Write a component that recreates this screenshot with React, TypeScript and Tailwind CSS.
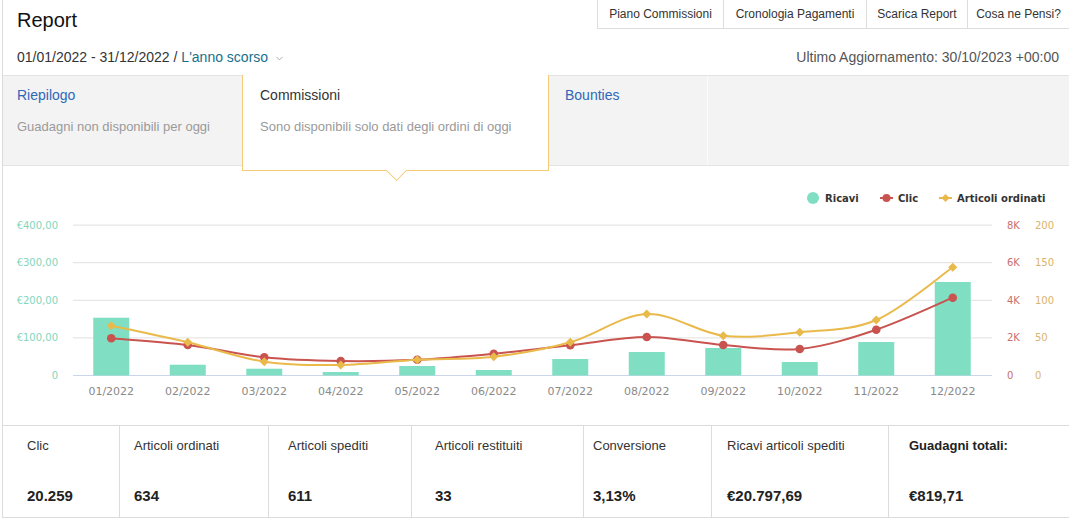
import { ChevronDown } from "lucide-react";

const months = [
  "01/2022", "02/2022", "03/2022", "04/2022", "05/2022", "06/2022",
  "07/2022", "08/2022", "09/2022", "10/2022", "11/2022", "12/2022",
];

// pixel positions read off the chart (page coordinates)
const barTops = [317.7, 364.7, 368.7, 372, 366, 370, 359, 352, 348, 362, 342, 282];
const clicY = [338.3, 345, 357.3, 361, 359.7, 353.7, 345.3, 337, 345, 349, 329.7, 297.7];
const ordiniY = [325.7, 342.3, 361.7, 365, 359.7, 356.7, 342.3, 314, 335.7, 332.3, 320, 267.3];

const BASE = 375.5;
const cx = (i: number) => 73 + 76.5 * (i + 0.5);

function spline(ys: number[]) {
  const pts = ys.map((y, i) => [cx(i), y]);
  let d = `M${pts[0][0]},${pts[0][1]}`;
  for (let i = 0; i < pts.length - 1; i++) {
    const p0 = pts[i - 1] || pts[i];
    const p1 = pts[i];
    const p2 = pts[i + 1];
    const p3 = pts[i + 2] || p2;
    const c1x = p1[0] + (p2[0] - p0[0]) / 6;
    const c1y = p1[1] + (p2[1] - p0[1]) / 6;
    const c2x = p2[0] - (p3[0] - p1[0]) / 6;
    const c2y = p2[1] - (p3[1] - p1[1]) / 6;
    d += ` C${c1x},${c1y} ${c2x},${c2y} ${p2[0]},${p2[1]}`;
  }
  return d;
}

const diamond = (x: number, y: number, s = 4.5) =>
  `M${x},${y - s} L${x + s},${y} L${x},${y + s} L${x - s},${y} Z`;

const grid = [225.1, 262.7, 300.3, 337.9];
const leftLabels = ["€400,00", "€300,00", "€200,00", "€100,00", "0"];
const kLabels = ["8K", "6K", "4K", "2K", "0"];
const nLabels = ["200", "150", "100", "50", "0"];
const labelY = [225.1, 262.7, 300.3, 337.9, 375.5];

const RED = "#c8534f";
const YEL = "#e9b94a";
const TEAL = "#80dfc3";

function Chart() {
  const font = "'DejaVu Sans', Verdana, sans-serif";
  return (
    <svg width="1066" height="259" viewBox="3 166 1066 259" className="block">
      {/* legend */}
      <circle cx="813" cy="198" r="6" fill={TEAL} />
      <text x="825" y="201.5" fontFamily={font} fontSize="10" fontWeight="bold" fill="#333">Ricavi</text>
      <line x1="880" y1="198" x2="893" y2="198" stroke={RED} strokeWidth="2" />
      <circle cx="886.5" cy="198" r="4" fill={RED} />
      <text x="898" y="201.5" fontFamily={font} fontSize="10" fontWeight="bold" fill="#333">Clic</text>
      <line x1="939" y1="198" x2="952" y2="198" stroke={YEL} strokeWidth="2" />
      <path d={diamond(945.5, 198, 4)} fill={YEL} />
      <text x="957" y="201.5" fontFamily={font} fontSize="10" fontWeight="bold" fill="#333">Articoli ordinati</text>

      {/* grid */}
      {grid.map((y) => (
        <line key={y} x1="73" x2="992" y1={y} y2={y} stroke="#e0e0e0" strokeWidth="1" />
      ))}
      <line x1="73" x2="992" y1={BASE} y2={BASE} stroke="#ccd6eb" strokeWidth="1" />

      {/* axis labels */}
      {leftLabels.map((l, i) => (
        <text key={l} x="58" y={labelY[i] + 3.5} textAnchor="end" fontFamily={font} fontSize="10" fill="#82d6bd">{l}</text>
      ))}
      {kLabels.map((l, i) => (
        <text key={l} x="1007" y={labelY[i] + 3.5} fontFamily={font} fontSize="10" fill="#c9706d">{l}</text>
      ))}
      {nLabels.map((l, i) => (
        <text key={l} x="1035" y={labelY[i] + 3.5} fontFamily={font} fontSize="10" fill="#d8b56c">{l}</text>
      ))}
      {months.map((m, i) => (
        <text key={m} x={cx(i)} y="395" textAnchor="middle" fontFamily={font} fontSize="11" fill="#8a8a8a">{m}</text>
      ))}

      {/* bars */}
      {barTops.map((t, i) => (
        <rect key={i} x={cx(i) - 18} y={t} width="36" height={BASE - t} fill={TEAL} />
      ))}

      {/* lines */}
      <path d={spline(clicY)} fill="none" stroke={RED} strokeWidth="2" />
      {clicY.map((y, i) => (
        <circle key={i} cx={cx(i)} cy={y} r="4.3" fill={RED} />
      ))}
      <path d={spline(ordiniY)} fill="none" stroke={YEL} strokeWidth="2" />
      {ordiniY.map((y, i) => (
        <path key={i} d={diamond(cx(i), y)} fill={YEL} />
      ))}
    </svg>
  );
}

const stats = [
  { label: "Clic", value: "20.259", w: "w-[117px] pl-[24px]" },
  { label: "Articoli ordinati", value: "634", w: "w-[149px] pl-[14px]" },
  { label: "Articoli spediti", value: "611", w: "w-[143px] pl-[19px]" },
  { label: "Articoli restituiti", value: "33", w: "w-[172px] pl-[23px]" },
  { label: "Conversione", value: "3,13%", w: "w-[128px] pl-[9px]" },
  { label: "Ricavi articoli spediti", value: "€20.797,69", w: "w-[177px] pl-[15px]" },
];

export default function App() {
  return (
    <div className="h-[518px] w-[1069px] overflow-hidden bg-white pl-[2px] font-['Liberation_Sans',Arial,sans-serif] text-[#333]">
      <div className="flex h-full flex-col border-l border-[#dcdcdc]">
        {/* Header */}
        <div className="flex h-[75px] flex-col">
          <div className="flex h-[44px] items-start justify-between">
            <h1 className="pl-[14px] pt-[6px] text-[20px] leading-[28px] text-[#111]">Report</h1>
            <div className="flex h-[29px] text-[12px] text-[#333]">
              <div className="flex w-[126px] items-center justify-center border-b border-l border-[#ddd]">Piano Commissioni</div>
              <div className="flex w-[143px] items-center justify-center border-b border-l border-[#ddd]">Cronologia Pagamenti</div>
              <div className="flex w-[101px] items-center justify-center border-b border-l border-[#ddd]">Scarica Report</div>
              <div className="flex w-[102px] items-center justify-center border-b border-l border-[#ddd]">Cosa ne Pensi?</div>
            </div>
          </div>
          <div className="flex h-[26px] items-center justify-between pl-[14px] pr-[10px] text-[14px]">
            <div className="flex items-center">
              <span className="text-[#333]">01/01/2022 - 31/12/2022 / </span>
              <span className="ml-[4px] text-[#17708c]">L'anno scorso</span>
              <ChevronDown className="ml-[6px] mt-[3px] h-[11px] w-[11px] text-[#888]" strokeWidth={1.5} />
            </div>
            <div className="text-[#555]">Ultimo Aggiornamento: 30/10/2023 +00:00</div>
          </div>
        </div>

        {/* Tabs */}
        <div className="flex h-[91px] border-y border-[#e3e3e3] bg-[#f3f3f3]">
          <div className="w-[239px] pl-[14px] pt-[9px]">
            <div className="text-[14px] leading-[20px] text-[#2f67b8]">Riepilogo</div>
            <div className="mt-[12px] text-[13px] leading-[20px] text-[#9a9a9a]">Guadagni non disponibili per oggi</div>
          </div>
          <div className="relative z-10 -mt-px h-[96px] w-[307px] self-start border-x border-b border-[#f4cb78] bg-white pl-[17px] pt-[10px]">
            <div className="text-[14px] leading-[20px] text-[#333]">Commissioni</div>
            <div className="mt-[12px] text-[13px] leading-[20px] text-[#9a9a9a]">Sono disponibili solo dati degli ordini di oggi</div>
            <div className="absolute bottom-[-8px] left-[146px] h-[15px] w-[15px] rotate-45 border-b border-r border-[#f4cb78] bg-white" />
          </div>
          <div className="w-[159px] border-r border-[#fbfbfb] pl-[16px] pt-[9px]">
            <div className="text-[14px] leading-[20px] text-[#2f67b8]">Bounties</div>
          </div>
          <div className="flex-1" />
        </div>

        {/* Chart */}
        <div className="h-[259px]">
          <Chart />
        </div>

        {/* Stats */}
        <div className="flex h-[93px] border-y border-[#dcdcdc]">
          {stats.map((s) => (
            <div key={s.label} className={`${s.w} border-r border-[#dcdcdc] pt-[11px]`}>
              <div className="text-[13px] leading-[18px] text-[#333]">{s.label}</div>
              <div className="mt-[31px] text-[15px] font-bold leading-[20px] text-[#222]">{s.value}</div>
            </div>
          ))}
          <div className="flex-1 pl-[20px] pt-[11px]">
            <div className="text-[13px] font-bold leading-[18px] text-[#222]">Guadagni totali:</div>
            <div className="mt-[31px] text-[15px] font-bold leading-[20px] text-[#222]">€819,71</div>
          </div>
        </div>
      </div>
    </div>
  );
}
